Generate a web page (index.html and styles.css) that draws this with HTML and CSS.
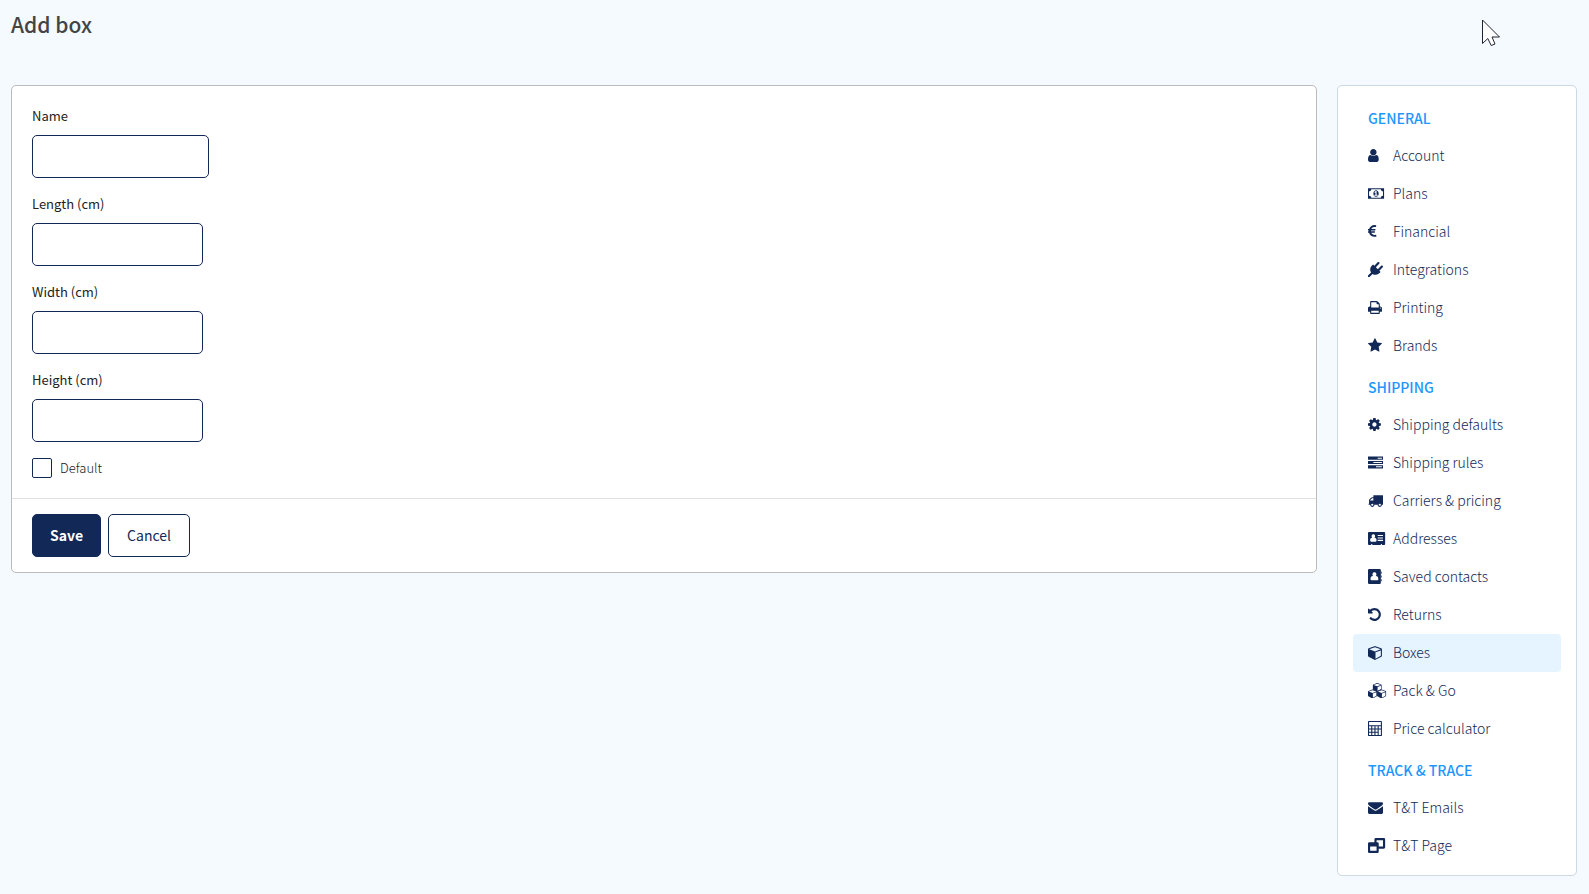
FILE: index.html
```html
<!DOCTYPE html>
<html lang="en">
<head>
<meta charset="utf-8">
<title>Add box</title>
<link rel="stylesheet" href="styles.css">
</head>
<body>
<header class="page-header">
  <h1 class="page-title">Add box</h1>
</header>
<div class="layout">
  <main class="card">
    <form>
      <div class="card-body">
        <div class="field">
          <label for="name">Name</label>
          <input class="text-input text-input-name" id="name" type="text">
        </div>
        <div class="field">
          <label for="length">Length (cm)</label>
          <input class="text-input" id="length" type="text">
        </div>
        <div class="field">
          <label for="width">Width (cm)</label>
          <input class="text-input" id="width" type="text">
        </div>
        <div class="field">
          <label for="height">Height (cm)</label>
          <input class="text-input" id="height" type="text">
        </div>
        <div class="check">
          <input class="checkbox" id="default" type="checkbox">
          <label for="default">Default</label>
        </div>
      </div>
      <div class="card-footer">
        <button class="btn btn-primary" type="submit">Save</button>
        <button class="btn" type="button">Cancel</button>
      </div>
    </form>
  </main>
  <nav class="sidebar" aria-label="Settings">
    <h2 class="nav-title">General</h2>
    <a class="nav-item" href="#"><svg class="icon" viewBox="256 -119 2389 1911"><path d="M1536 1399q0 109-62.5 187t-150.5 78h-854q-88 0-150.500-78t-62.500-187q0-85 8.500-160.500t31.500-152 58.500-131 94-89 134.500-34.500q131 128 313 128t313-128q76 0 134.500 34.500t94 89 58.500 131 31.500 152 8.500 160.500zm-256-887q0 159-112.500 271.500t-271.500 112.500-271.500-112.500-112.500-271.500 112.500-271.500 271.500-112.500 271.500 112.500 112.500 271.500z"/></svg>Account</a>
    <a class="nav-item" href="#"><svg class="icon" viewBox="0 -119 2389 1911"><path fill-rule="evenodd" d="M0 256H1920V1536H0ZM384 384Q384 490 309 565T128 640V1152Q234 1152 309 1227T384 1408H1536Q1536 1302 1611 1227T1792 1152V640Q1686 640 1611 565T1536 384ZM960 496C1120 496 1280 650 1280 896S1120 1296 960 1296S640 1142 640 896S800 496 960 496ZM768 1152H1152V1056H1024V608H910L762 745L839 825L894 774V1056H768Z"/></svg>Plans</a>
    <a class="nav-item" href="#"><svg class="icon" viewBox="384 -119 2389 1911"><path d="M1360 1307l35 159q3 12-3 22.500t-17 14.500l-5 1q-4 2-10.500 3.500t-16 4.500-21.500 5.500-25.500 5-30 5-33.500 4.500-36.500 3-38.500 1q-234 0-409-130.500t-238-351.500h-95q-13 0-22.500-9.500t-9.500-22.500v-113q0-13 9.500-22.500t22.500-9.500h66q-2-57 1-105h-67q-14 0-23-9t-9-23v-114q0-14 9-23t23-9h98q67-210 243.500-338t400.500-128q102 0 194 23 11 3 20 15 6 11 3 24l-43 159q-3 13-14 19.500t-24 2.500l-4-1q-4-1-11.500-2.500l-17.500-3.500-22.500-3.500-26-3-29-2.500-29.500-1q-126 0-226 64t-150 176h468q16 0 25 12 10 12 7 26l-24 114q-5 26-32 26h-488q-3 37 0 105h459q15 0 25 12 9 12 6 27l-24 112q-2 11-11 18.500t-20 7.500h-387q48 117 149.500 185.500t228.500 68.500q18 0 36-1.500t33.500-3.500 29.500-4.500 24.500-5 18.500-4.500l12-3 5-2q13-5 26 2 12 7 15 21z"/></svg>Financial</a>
    <a class="nav-item" href="#"><svg class="icon" viewBox="0 -119 2389 1911"><path d="M1755 453q37 38 37 90.500t-37 90.500l-401 400 150 150-160 160q-163 163-389.500 186.500t-411.500-100.500l-362 362h-181v-181l362-362q-124-185-100.500-411.500t186.500-389.500l160-160 150 150 400-401q38-37 91-37t90 37 37 90.500-37 90.500l-400 401 234 234 401-400q38-37 91-37t90 37z"/></svg>Integrations</a>
    <a class="nav-item" href="#"><svg class="icon" viewBox="64 -119 2389 1911"><path d="M448 1536h896v-256h-896v256zm0-640h896v-384h-160q-40 0-68-28t-28-68v-160h-640v640zm1152 64q0-26-19-45t-45-19-45 19-19 45 19 45 45 19 45-19 19-45zm128 0v416q0 13-9.500 22.500t-22.500 9.500h-224v160q0 40-28 68t-68 28h-960q-40 0-68-28t-28-68v-160h-224q-13 0-22.500-9.500t-9.500-22.500v-416q0-79 56.500-135.500t135.500-56.500h64v-544q0-40 28-68t68-28h672q40 0 88 20t76 48l152 152q28 28 48 76t20 88v256h64q79 0 135.500 56.500t56.500 135.500z"/></svg>Printing</a>
    <a class="nav-item" href="#"><svg class="icon" viewBox="64 -119 2389 1911"><path d="M1728 647q0 22-26 48l-363 354 86 500q1 7 1 20 0 21-10.500 35.500t-30.500 14.500q-19 0-40-12l-449-236-449 236q-22 12-40 12-21 0-31.500-14.500t-10.500-35.500q0-6 2-20l86-500-364-354q-25-27-25-48 0-37 56-46l502-73 225-455q19-41 49-41t49 41l225 455 502 73q56 9 56 46z"/></svg>Brands</a>
    <h2 class="nav-title">Shipping</h2>
    <a class="nav-item" href="#"><svg class="icon" viewBox="128 -119 2389 1911"><path d="M1152 896q0-106-75-181t-181-75-181 75-75 181 75 181 181 75 181-75 75-181zm512-109v222q0 12-8 23t-20 13l-185 28q-19 54-39 91 35 50 107 138 10 12 10 25t-9 23q-27 37-99 108t-94 71q-12 0-26-9l-138-108q-44 23-91 38-16 136-29 186-7 28-36 28h-222q-14 0-24.500-8.500t-11.500-21.500l-28-184q-49-16-90-37l-141 107q-10 9-25 9-14 0-25-11-126-114-165-168-7-10-7-23 0-12 8-23 15-21 51-66.500t54-70.500q-27-50-41-99l-183-27q-13-2-21-12.500t-8-23.500v-222q0-12 8-23t19-13l186-28q14-46 39-92-40-57-107-138-10-12-10-24 0-10 9-23 26-36 98.500-107.500t94.500-71.500q13 0 26 10l138 107q44-23 91-38 16-136 29-186 7-28 36-28h222q14 0 24.500 8.500t11.500 21.500l28 184q49 16 90 37l142-107q9-9 24-9 13 0 25 10 129 119 165 170 7 8 7 22 0 12-8 23-15 21-51 66.500t-54 70.500q26 50 41 98l183 28q13 2 21 12.500t8 23.500z"/></svg>Shipping defaults</a>
    <a class="nav-item" href="#"><svg class="icon" viewBox="0 -119 2389 1911"><path fill-rule="evenodd" d="M0 192H1792V576H0ZM0 704H1792V1088H0ZM0 1216H1792V1600H0ZM1152 320V448H1664V320ZM640 832V960H1664V832ZM960 1344V1472H1664V1344Z"/></svg>Shipping rules</a>
    <a class="nav-item" href="#"><svg class="icon" viewBox="0 -119 2389 1911"><path d="M640 1408q0-52-38-90t-90-38-90 38-38 90 38 90 90 38 90-38 38-90zm-384-512h384v-256h-158q-13 0-22 9l-195 195q-9 9-9 22v30zm1280 512q0-52-38-90t-90-38-90 38-38 90 38 90 90 38 90-38 38-90zm256-1088v1024q0 15-4 26.500t-13.500 18.500-16.500 11.500-23.500 6-22.500 2-25.500 0-22.500-.5q0 106-75 181t-181 75-181-75-75-181h-384q0 106-75 181t-181 75-181-75-75-181h-64q-3 0-22.500.5t-25.500 0-22.500-2-23.500-6-16.500-11.500-13.500-18.500-4-26.500q0-26 19-45t45-19v-320q0-8-.5-35t0-38 2.500-34.500 6.500-37 14-30.500 22.500-30l198-198q19-19 50.500-32t58.500-13h160v-192q0-26 19-45t45-19h1024q26 0 45 19t19 45z"/></svg>Carriers &amp; pricing</a>
    <a class="nav-item" href="#"><svg class="icon" viewBox="0 -119 2389 1911"><path fill-rule="evenodd" d="M112 128H1936Q2048 128 2048 240V1552Q2048 1664 1936 1664H1664V1568H1536V1664H512V1568H384V1664H112Q0 1664 0 1552V240Q0 128 112 128ZM640 384A220 236 0 0 0 505 800C330 790 256 920 256 1120Q256 1280 370 1280H910Q1024 1280 1024 1120C1024 920 950 790 775 800A220 236 0 0 0 640 384ZM1152 480V608H1792V480ZM1152 768V896H1792V768ZM1152 1056V1184H1792V1056Z"/></svg>Addresses</a>
    <a class="nav-item" href="#"><svg class="icon" viewBox="0 -119 2389 1911"><path fill-rule="evenodd" d="M150 0H1386Q1536 0 1536 150V1642Q1536 1792 1386 1792H150Q0 1792 0 1642V150Q0 0 150 0ZM768 400A240 250 0 0 0 610 840C420 820 300 960 300 1210Q300 1340 410 1340H1126Q1236 1340 1236 1210C1236 960 1116 820 926 840A240 250 0 0 0 768 400ZM1586 320H1664V576H1586ZM1586 768H1664V1024H1586ZM1586 1216H1664V1472H1586Z"/></svg>Saved contacts</a>
    <a class="nav-item" href="#"><svg class="icon" viewBox="128 -119 2389 1911"><path d="M1664 896q0 156-61 298t-164 245-245 164-298 61q-172 0-327-72.500t-264-204.500q-7-10-6.500-22.500t8.500-20.500l137-138q10-9 25-9 16 2 23 12 73 95 179 147t225 52q104 0 198.500-40.500t163.500-109.500 109.500-163.500 40.500-198.500-40.500-198.500-109.500-163.500-163.500-109.500-198.500-40.500q-98 0-188 35.500t-160 101.500l137 138q31 30 14 69-17 40-59 40h-448q-26 0-45-19t-19-45v-448q0-42 40-59 39-17 69 14l130 129q107-101 244.500-156.500t284.500-55.500q156 0 298 61t245 164 164 245 61 298z"/></svg>Returns</a>
    <a class="nav-item nav-item-active" href="#" aria-current="page"><svg class="icon" viewBox="0 -119 2389 1911"><path id="cube" d="M896 1629l640-349v-636l-640 233v752zm-64-865l698-254-698-254-698 254zm832-252v768q0 35-18 65t-49 47l-704 384q-28 16-61 16t-61-16l-704-384q-31-17-49-47t-18-65v-768q0-40 23-73t61-47l704-256q22-8 44-8t44 8l704 256q38 14 61 47t23 73z"/></svg>Boxes</a>
    <a class="nav-item" href="#"><svg class="icon" viewBox="0 -119 2389 1911"><use href="#cube" transform="translate(580 -80) scale(.63)"/><use href="#cube" transform="translate(0 690) scale(.65)"/><use href="#cube" transform="translate(1080 690) scale(.65)"/></svg>Pack &amp; Go</a>
    <a class="nav-item" href="#"><svg class="icon" viewBox="0 -119 2389 1911"><path fill-rule="evenodd" d="M100 0H1564Q1664 0 1664 100V1692Q1664 1792 1564 1792H100Q0 1792 0 1692V100Q0 0 100 0ZM128 128V512H1536V128ZM128 640V896H384V640ZM512 640V896H768V640ZM896 640V896H1152V640ZM1280 640V896H1536V640ZM128 1024V1280H384V1024ZM512 1024V1280H768V1024ZM896 1024V1280H1152V1024ZM128 1408V1664H384V1408ZM512 1408V1664H768V1408ZM896 1408V1664H1152V1408ZM1280 1024V1664H1536V1024Z"/></svg>Price calculator</a>
    <h2 class="nav-title">Track &amp; Trace</h2>
    <a class="nav-item" href="#"><svg class="icon" viewBox="0 -119 2389 1911"><path d="M1792 710v794q0 66-47 113t-113 47h-1472q-66 0-113-47t-47-113v-794q44 49 101 87 362 246 497 345 57 42 92.500 65.500t94.500 48 110 24.500h2q51 0 110-24.500t94.500-48 92.500-65.500q170-123 498-345 57-39 100-87zm0-294q0 79-49 151t-122 123q-376 261-468 325-10 7-42.500 31t-54 38.500-52 32.500-57.500 27-50 9h-2q-23 0-50-9t-57.500-27-52-32.500-54-38.500-42.500-31q-91-64-262-182.500t-205-142.500q-62-42-117-115.500t-55-136.500q0-78 41.500-130t118.500-52h1472q65 0 112.500 47t47.500 113z"/></svg>T&amp;T Emails</a>
    <a class="nav-item" href="#"><svg class="icon" viewBox="0 -119 2389 1911"><path fill-rule="evenodd" d="M928 0H1888Q2048 0 2048 160V1120Q2048 1280 1888 1280H1280V1632Q1280 1792 1120 1792H160Q0 1792 0 1632V672Q0 512 160 512H768V160Q768 0 928 0ZM256 1024V1536H1024V1024ZM1024 256V512H1120Q1280 512 1280 672V1024H1792V256Z"/></svg>T&amp;T Page</a>
  </nav>
</div>
<svg class="cursor" viewBox="0 0 20 28" aria-hidden="true"><path d="M1.500 1V24.500L6.800 19.500L10.200 26.500L14 25L11 18H18.500Z"/></svg>
</body>
</html>
```
FILE: styles.css
```css
* {
  box-sizing: border-box;
}

body {
  margin: 0;
  padding: 0 12px 18px 11px;
  background: #f4faff;
  color: #222;
  font-family: "Noto Sans CJK SC", "Open Sans", sans-serif;
  font-size: 14px;
  line-height: 20px;
}

.page-header {
  padding: 9px 0 46px;
}

.page-title {
  margin: 0;
  color: #444;
  font-size: 21px;
  font-weight: 500;
  line-height: 30px;
}

.layout {
  display: flex;
  align-items: flex-start;
  gap: 20px;
}

.card {
  flex: 1;
  background: #fff;
  border: 1px solid #bbb;
  border-radius: 5px;
}

.card-body {
  padding: 20px;
}

.field {
  display: flex;
  flex-direction: column;
  align-items: flex-start;
  gap: 9px;
  margin-bottom: 16px;
  font-size: 13px;
  font-weight: 400;
}

.text-input {
  width: 171px;
  height: 43px;
  padding: 0 12px;
  background: #fff;
  border: 1px solid #122856;
  border-radius: 5px;
  font: inherit;
}

.text-input-name {
  width: 177px;
}

.check {
  display: flex;
  align-items: center;
  gap: 8px;
  font-size: 13px;
  font-weight: 300;
}

.checkbox {
  appearance: none;
  width: 20px;
  height: 20px;
  margin: 0;
  background: #fff;
  border: 1px solid #122856;
  border-radius: 2px;
}

.checkbox:checked {
  background: #122856;
}

.card-footer {
  display: flex;
  gap: 7px;
  padding: 15px 20px;
  border-top: 1px solid #e2e2e2;
}

.btn {
  height: 43px;
  padding: 0 18px 2px;
  background: #fff;
  border: 1px solid #122856;
  border-radius: 5px;
  color: #122856;
  font: inherit;
  cursor: pointer;
}

.btn-primary {
  padding: 0 17px 2px;
  background: #122856;
  color: #fff;
  font-weight: 700;
}

.sidebar {
  width: 240px;
  padding: 10px 15px;
  background: #fff;
  border: 1px solid #ccd8e2;
  border-radius: 5px;
}

.nav-title {
  margin: 0;
  padding: 12px 15px 9px;
  color: #1e96ff;
  font-size: 14px;
  font-weight: 500;
  text-transform: uppercase;
}

.nav-item {
  display: flex;
  align-items: center;
  gap: 5px;
  height: 38px;
  padding: 0 15px 2px;
  border-radius: 4px;
  color: #122856;
  font-weight: 300;
  text-decoration: none;
}

.nav-item-active {
  background: #e6f4ff;
}

.icon {
  width: 20px;
  height: 16px;
  fill: currentColor;
}

.cursor {
  position: absolute;
  top: 19px;
  right: 88px;
  width: 20px;
  height: 28px;
  fill: #fff;
  stroke: #223;
}
```
